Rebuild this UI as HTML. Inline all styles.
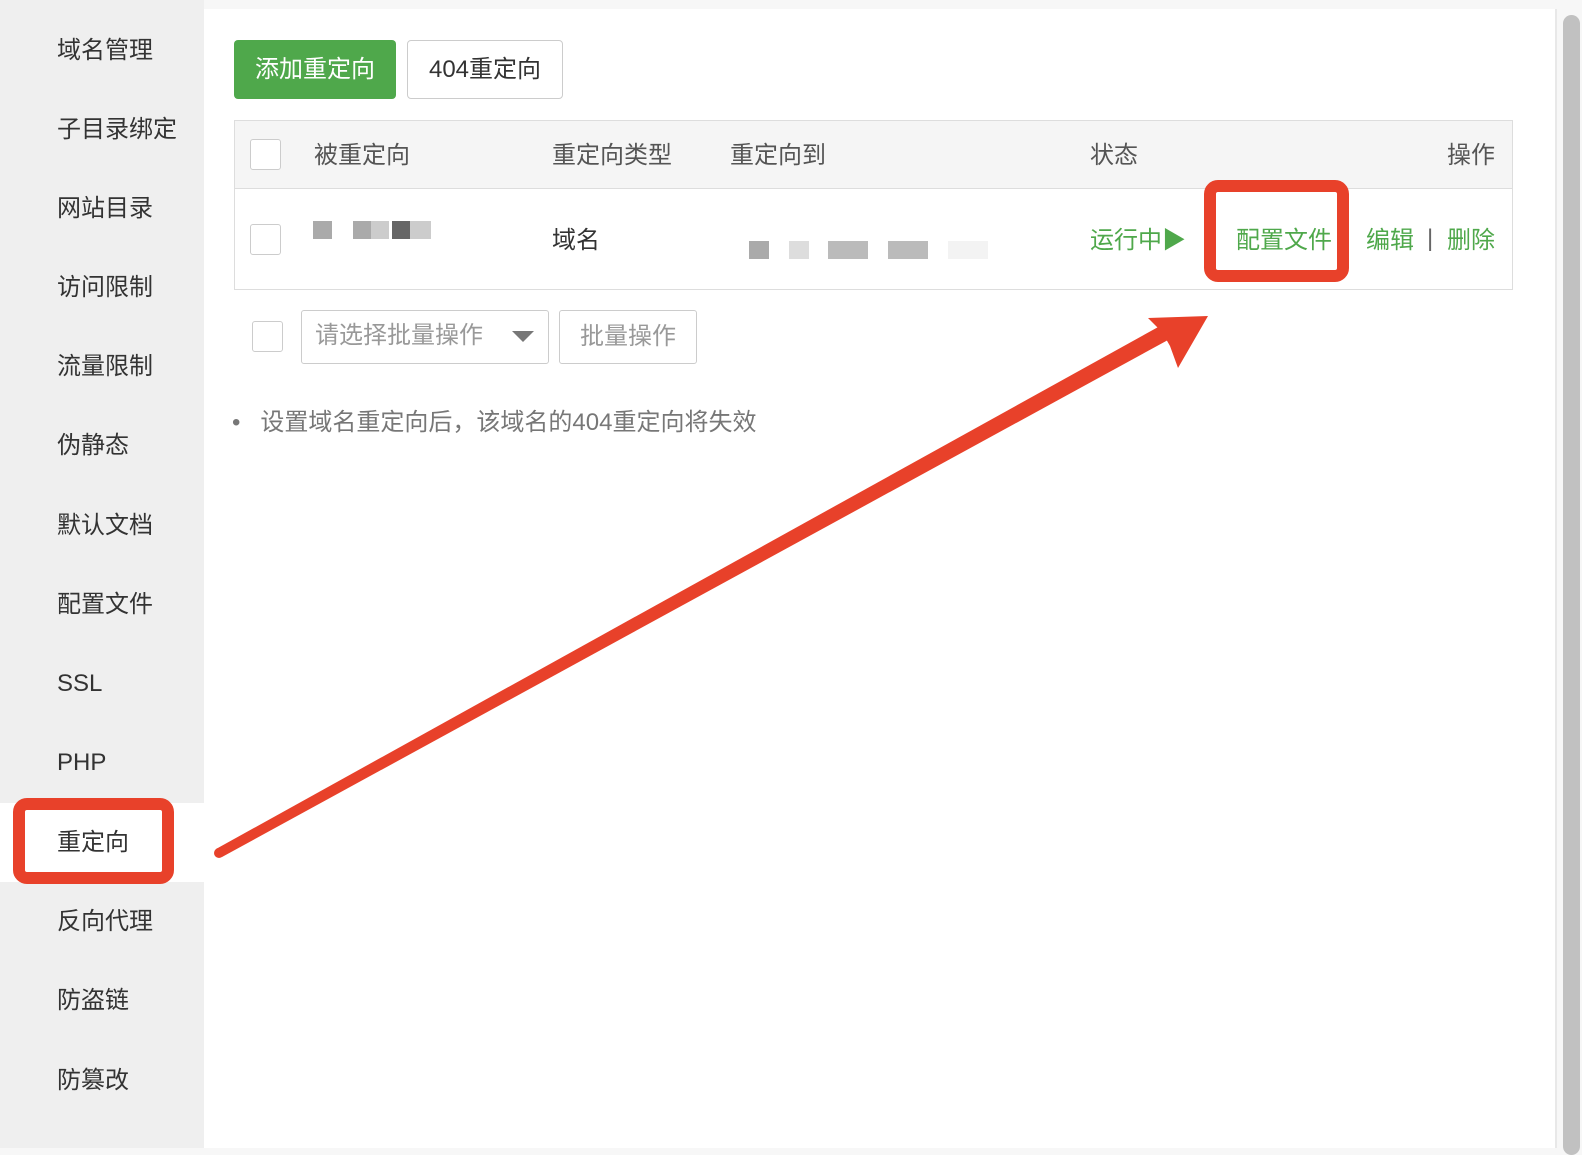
<!DOCTYPE html>
<html><head><meta charset="utf-8"><style>
*{margin:0;padding:0;box-sizing:border-box}
body{width:1582px;height:1148px;position:relative;background:#f7f7f7;font-family:"Liberation Sans","Noto Sans CJK SC",sans-serif;overflow:hidden;color:#333}
.side{position:absolute;left:0;top:0;width:204px;height:1148px;background:#efefef}
.side .it{position:absolute;left:57px;font-size:24px;color:#333;line-height:30px}
.sel{position:absolute;left:0;top:803px;width:204px;height:79px;background:#fff}
.main{position:absolute;left:204px;top:9px;width:1353px;height:1139px;background:#fff;border-right:2px solid #e8e8e8}
.t{position:absolute;font-size:24px;line-height:30px;white-space:nowrap}
.cb{position:absolute;width:31px;height:31px;border:1px solid #ccc;border-radius:3px;background:#fff}
.g{color:#4fa84b}
.box{position:absolute;border:12px solid #e8412a;border-radius:14px}
</style></head><body>
<div class="side">
<div class="sel"></div>
<div class="it" style="top:36px">域名管理</div>
<div class="it" style="top:115px">子目录绑定</div>
<div class="it" style="top:194px">网站目录</div>
<div class="it" style="top:273px">访问限制</div>
<div class="it" style="top:352px">流量限制</div>
<div class="it" style="top:431px">伪静态</div>
<div class="it" style="top:511px">默认文档</div>
<div class="it" style="top:590px">配置文件</div>
<div class="it" style="top:669px">SSL</div>
<div class="it" style="top:748px">PHP</div>
<div class="it" style="top:828px">重定向</div>
<div class="it" style="top:907px">反向代理</div>
<div class="it" style="top:986px">防盗链</div>
<div class="it" style="top:1066px">防篡改</div>
</div>
<div class="main"></div>
<div style="position:absolute;left:1563px;top:15px;width:17px;height:1140px;background:#c1c1c1;border-radius:9px"></div>
<div style="position:absolute;left:234px;top:40px;width:162px;height:59px;background:#4fa84b;border-radius:4px;color:#fff;font-size:24px;line-height:59px;text-align:center">添加重定向</div>
<div style="position:absolute;left:407px;top:40px;width:156px;height:59px;border:1px solid #ccc;border-radius:4px;font-size:24px;line-height:57px;text-align:center;color:#333">404重定向</div>
<div style="position:absolute;left:234px;top:120px;width:1279px;height:170px;border:1px solid #ddd"></div>
<div style="position:absolute;left:235px;top:121px;width:1277px;height:68px;background:#f5f5f5;border-bottom:1px solid #ddd"></div>
<div class="cb" style="left:250px;top:139px"></div>
<div class="t" style="left:314px;top:141px;color:#555">被重定向</div>
<div class="t" style="left:552px;top:141px;color:#555">重定向类型</div>
<div class="t" style="left:730px;top:141px;color:#555">重定向到</div>
<div class="t" style="left:1090px;top:141px;color:#555">状态</div>
<div class="t" style="left:1447px;top:141px;color:#555">操作</div>
<div class="cb" style="left:250px;top:224px"></div>
<div style="position:absolute;left:313px;top:221px;width:19px;height:18px;background:#aaa"></div>
<div style="position:absolute;left:353px;top:221px;width:18px;height:18px;background:#aaa"></div>
<div style="position:absolute;left:371px;top:221px;width:18px;height:18px;background:#ccc"></div>
<div style="position:absolute;left:392px;top:221px;width:18px;height:18px;background:#666"></div>
<div style="position:absolute;left:410px;top:221px;width:21px;height:18px;background:#ccc"></div>
<div class="t" style="left:552px;top:226px;color:#333">域名</div>
<div style="position:absolute;left:749px;top:241px;width:20px;height:18px;background:#aaa"></div>
<div style="position:absolute;left:789px;top:241px;width:20px;height:18px;background:#ddd"></div>
<div style="position:absolute;left:828px;top:241px;width:40px;height:18px;background:#bbb"></div>
<div style="position:absolute;left:888px;top:241px;width:40px;height:18px;background:#bbb"></div>
<div style="position:absolute;left:948px;top:241px;width:40px;height:18px;background:#f3f3f3"></div>
<div class="t g" style="left:1090px;top:226px">运行中▶</div>
<div class="t g" style="left:1236px;top:226px">配置文件</div>
<div class="t" style="left:1344px;top:224px;color:#666">|</div>
<div class="t g" style="left:1366px;top:226px">编辑</div>
<div class="t" style="left:1427px;top:224px;color:#666">|</div>
<div class="t g" style="left:1447px;top:226px">删除</div>
<div class="cb" style="left:252px;top:321px"></div>
<div style="position:absolute;left:301px;top:310px;width:248px;height:54px;border:1px solid #ccc;border-radius:3px"></div>
<div class="t" style="left:315px;top:321px;color:#999">请选择批量操作</div>
<div style="position:absolute;left:512px;top:331px;width:0;height:0;border-left:11px solid transparent;border-right:11px solid transparent;border-top:11px solid #777"></div>
<div style="position:absolute;left:559px;top:310px;width:138px;height:54px;border:1px solid #ccc;border-radius:3px;font-size:24px;line-height:52px;text-align:center;color:#999">批量操作</div>
<div class="t" style="left:232px;top:408px;color:#777">•&nbsp;&nbsp;&nbsp;设置域名重定向后，该域名的404重定向将失效</div>
<div class="box" style="left:13px;top:798px;width:161px;height:86px"></div>
<div class="box" style="left:1204px;top:180px;width:145px;height:102px"></div>
<svg style="position:absolute;left:0;top:0" width="1582" height="1148">
<polygon points="216,849 222,857 1168,340 1160,326" fill="#e8412a"/>
<circle cx="219" cy="853" r="5" fill="#e8412a"/>
<polygon points="1208,316 1148,318 1162,332 1170,346 1178,368" fill="#e8412a"/>
</svg>
</body></html>
